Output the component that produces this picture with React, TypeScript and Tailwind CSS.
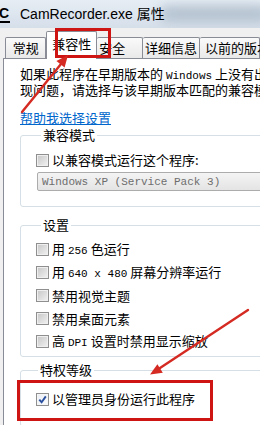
import React from "react";

function Latin({ children }: { children: React.ReactNode }) {
  return <span className="font-['Liberation_Mono',monospace] text-[11px]">{children}</span>;
}

function Box({ checked = false }: { checked?: boolean }) {
  return (
    <span
      className={
        checked
          ? "w-[13px] h-[13px] shrink-0 border border-[#8f8f8f] bg-[linear-gradient(135deg,#e9edf3,#fbfcfd)] shadow-[inset_0_0_0_1px_#f6f6f6] flex items-center justify-center"
          : "w-[13px] h-[13px] shrink-0 border border-[#8f8f8f] bg-[linear-gradient(135deg,#c6c6c6,#f2f2f2)] shadow-[inset_0_0_0_1px_#efefef]"
      }
    >
      {checked && (
        <svg width="9" height="9" viewBox="0 0 9 9">
          <path d="M1.3 4.6 L3.6 7.2 L7.8 1.4" fill="none" stroke="#2a4f9e" strokeWidth="1.9" />
        </svg>
      )}
    </span>
  );
}

function Row({ children, checked = false }: { children: React.ReactNode; checked?: boolean }) {
  return (
    <div className="h-[23px] flex items-center gap-[3px] whitespace-nowrap">
      <Box checked={checked} />
      <span>{children}</span>
    </div>
  );
}

export default function App() {
  return (
    <div className="relative w-[260px] h-[425px] overflow-hidden bg-[#f0f0f0] text-black font-['Noto_Sans_CJK_SC',sans-serif] text-[13px] leading-[14px]">
      {/* title bar */}
      <div className="relative h-[28px] bg-[linear-gradient(#e6edf4,#d5dfea)] flex items-center overflow-hidden">
        <div className="absolute left-[160px] top-[6px] w-[110px] h-[16px] rounded-full bg-[#b3c1cf] blur-[6px]"></div>
        <span className="relative ml-[-1px] w-[11px] h-[18px] border-b-[2px] border-black font-['Liberation_Sans',sans-serif] font-bold text-[14px] leading-[16px] text-black">C</span>
        <span className="relative ml-[10px] text-[14px] text-black font-['Liberation_Sans','Noto_Sans_CJK_SC',sans-serif] whitespace-nowrap">
          CamRecorder.exe 属性
        </span>
      </div>

      {/* tabs */}
      <div className="h-[30px] flex items-end whitespace-nowrap">
        <div className="ml-[5px] w-[47px] h-[21px] border border-b-0 border-[#898c95] rounded-t-[2px] bg-[linear-gradient(#fafafa,#e9e9e9)] flex items-center justify-center">常规</div>
        <div className="relative z-10 mb-[-1px] w-[58px] h-[28px] border border-b-0 border-[#898c95] rounded-t-[2px] bg-white flex items-center justify-center pb-[3px]">兼容性</div>
        <div className="w-[52px] h-[21px] border border-b-0 border-l-0 border-[#898c95] rounded-t-[2px] bg-[linear-gradient(#fafafa,#e9e9e9)] flex items-center pl-[2px]">安全</div>
        <div className="w-[65px] h-[21px] border border-b-0 border-l-0 border-[#898c95] rounded-t-[2px] bg-[linear-gradient(#fafafa,#e9e9e9)] flex items-center justify-center">详细信息</div>
        <div className="w-[60px] h-[21px] border border-b-0 border-l-0 border-[#898c95] rounded-t-[2px] bg-[linear-gradient(#fafafa,#e9e9e9)] flex items-center pl-[5px]">以前的版本</div>
      </div>

      {/* panel */}
      <div className="ml-[3px] w-[300px] h-[400px] bg-white border-t border-l border-[#898c95] pl-[16px] pt-[8px]">
        <div className="whitespace-nowrap">如果此程序在早期版本的 <Latin>Windows</Latin> 上没有出</div>
        <div className="whitespace-nowrap">现问题，请选择与该早期版本匹配的兼容模式。</div>

        <div className="mt-[14px] text-[#0066cc] underline whitespace-nowrap">帮助我选择设置</div>

        <fieldset className="mt-[3px] w-[300px] border border-[#d5dfe5] rounded-[3px] px-[15px] pb-[15px]">
          <legend className="ml-[5px] px-[2px]">兼容模式</legend>
          <div className="mt-[11px] h-[14px] flex items-center gap-[3px] whitespace-nowrap">
            <Box />
            <span>以兼容模式运行这个程序:</span>
          </div>
          <div className="mt-[5px] ml-[1px] h-[19px] border border-[#acacac] rounded-[2px] bg-[linear-gradient(#f4f4f4,#e4e4e4)] flex items-center pl-[4px] text-[#6d6d6d] whitespace-nowrap">
            <Latin>Windows XP (Service Pack 3)</Latin>
          </div>
        </fieldset>

        <fieldset className="mt-[11px] w-[300px] border border-[#d5dfe5] rounded-[3px] px-[15px] pb-[3px]">
          <legend className="ml-[5px] px-[2px]">设置</legend>
          <div className="mt-[6px]">
            <Row>用 <Latin>256</Latin> 色运行</Row>
            <Row>用 <Latin>640 x 480</Latin> 屏幕分辨率运行</Row>
            <Row>禁用视觉主题</Row>
            <Row>禁用桌面元素</Row>
            <Row>高 <Latin>DPI</Latin> 设置时禁用显示缩放</Row>
          </div>
        </fieldset>

        <fieldset className="mt-[6px] w-[300px] border border-[#d5dfe5] rounded-[3px] px-[15px] pb-[20px]">
          <legend className="ml-[2px] px-[2px]">特权等级</legend>
          <div className="mt-[15px] h-[14px] flex items-center gap-[3px] whitespace-nowrap">
            <Box checked />
            <span>以管理员身份运行此程序</span>
          </div>
        </fieldset>
      </div>

      {/* annotations */}
      <div className="absolute left-[55px] top-[28px] w-[56px] h-[30px] border-[3px] border-[#cf1414] z-20"></div>
      <div className="absolute left-[17px] top-[380px] w-[196px] h-[41px] border-[3px] border-[#cf1414] z-20"></div>
      <svg className="absolute left-0 top-0 z-30 pointer-events-none" width="260" height="425" viewBox="0 0 260 425">
        <line x1="22" y1="112" x2="61" y2="64" stroke="#d42a22" strokeWidth="2.4" strokeLinecap="round" />
        <polygon points="68,55 64.6,67.6 56.4,61" fill="#d42a22" />
        <line x1="248" y1="310" x2="160" y2="368" stroke="#d42a22" strokeWidth="2.4" strokeLinecap="round" />
        <polygon points="150,374.5 162.8,372.7 157.4,364.3" fill="#d42a22" />
      </svg>
    </div>
  );
}
